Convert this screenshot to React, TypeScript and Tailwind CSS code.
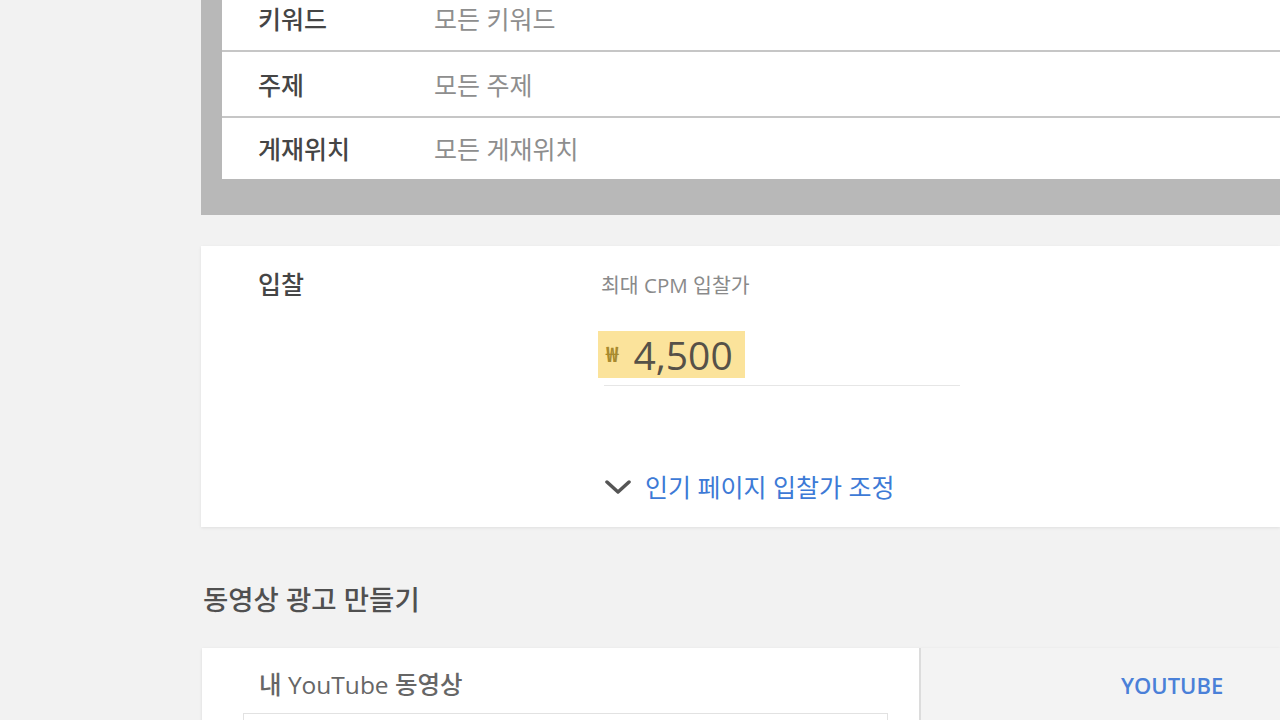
export default function App() {
  const rows = [
    { label: "키워드", value: "모든 키워드", h: "h-[66px] border-b-2 border-[#c6c6c6]" },
    { label: "주제", value: "모든 주제", h: "h-[66px] border-b-2 border-[#c6c6c6]" },
    { label: "게재위치", value: "모든 게재위치", h: "h-[61px]" },
  ];

  return (
    <div
      className="h-[720px] w-[1280px] overflow-hidden bg-[#f2f2f2] pl-[201px]"
      style={{ fontFamily: '"Open Sans", "Noto Sans CJK KR", sans-serif' }}
    >
      {/* targeting panel */}
      <div className="bg-[#b8b8b8] pb-[36px] pl-[21px]">
        <div className="-mt-[14px] bg-white">
          {rows.map((r) => (
            <div key={r.label} className={"flex items-center pl-[36px] pt-[3px] " + r.h}>
              <div className="w-[176px] text-[25px] font-medium text-[#454545]">{r.label}</div>
              <div className="text-[25px] text-[#8e8e8e]">{r.value}</div>
            </div>
          ))}
        </div>
      </div>

      {/* bid card */}
      <div className="mt-[31px] flex h-[281px] bg-white pl-[57px] pt-[26px] shadow-[0_1px_3px_rgba(0,0,0,0.08)]">
        <div className="w-[340px] text-[25px] font-medium leading-[24px] text-[#454545]">입찰</div>
        <div className="flex flex-col">
          <div className="pl-[3px] text-[20.5px] leading-[26px] text-[#8a8a8a]">최대 CPM 입찰가</div>
          <div className="ml-[6px] mt-[33px] w-[356px] border-b border-[#e6e6e6] pb-[7px]">
            <div className="-ml-[6px] flex h-[47px] w-[147px] items-center bg-[#fbe39b] pl-[8px]">
              <span className="text-[21px] font-bold leading-none text-[#a88a2e]">₩</span>
              <span className="ml-[15px] text-[39px] leading-none text-[#565148]">4,500</span>
            </div>
          </div>
          <div className="ml-[7px] mt-[86px] flex items-center">
            <svg width="26" height="16" viewBox="0 0 26 16" fill="none">
              <path d="M2 3 L13 13 L24 3" stroke="#555" strokeWidth="3.5" strokeLinecap="round" strokeLinejoin="round" />
            </svg>
            <span className="ml-[14px] text-[25px] leading-[30px] text-[#3d7ad6]">인기 페이지 입찰가 조정</span>
          </div>
        </div>
      </div>

      {/* create video ad */}
      <div className="ml-[2px] mt-[56px] text-[27.5px] font-medium leading-[34px] text-[#505050]">동영상 광고 만들기</div>

      <div className="ml-[1px] mt-[31px] flex h-[100px] shadow-[0_1px_3px_rgba(0,0,0,0.1)]">
        <div className="w-[717px] bg-white pt-[22px]">
          <div className="pl-[57px] text-[24.5px] font-medium leading-[30px] text-[#666]">내 YouTube 동영상</div>
          <div className="ml-[41px] mt-[13px] h-[40px] w-[645px] border border-[#e2e2e2]" />
        </div>
        <div className="flex-1 border-l-2 border-[#dcdcdc] bg-[#f3f3f3] pt-[22px]">
          <div className="pl-[200px] text-[22px] font-semibold leading-[30px] text-[#4a80d8]">YOUTUBE</div>
        </div>
      </div>
    </div>
  );
}
